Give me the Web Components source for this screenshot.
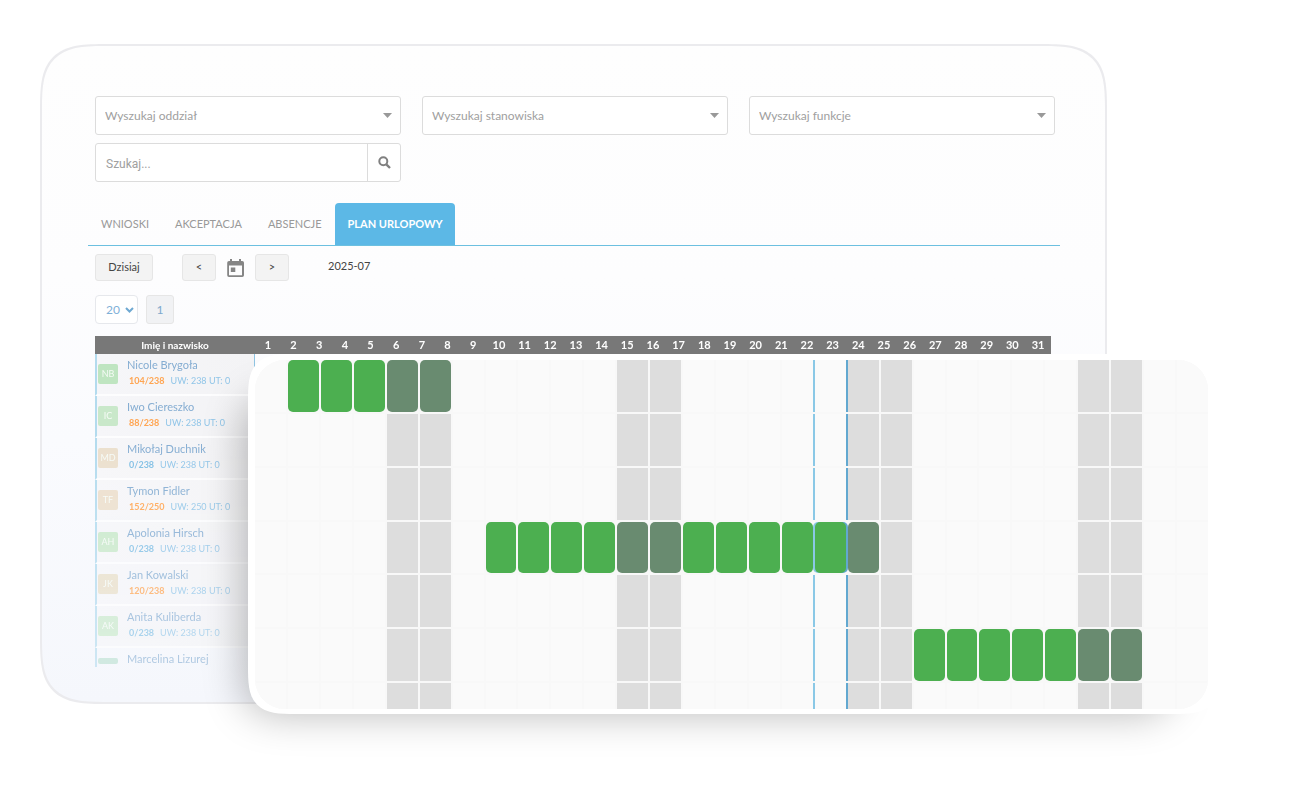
<!DOCTYPE html>
<html lang="pl">
<head>
<meta charset="utf-8">
<title>Plan urlopowy</title>
<style>
  body {
    margin: 0;
    background: #fff;
    font-family: Lato, "Liberation Sans", sans-serif;
  }
</style>
</head>
<body>
<leave-stage>
  <app-panel>
    <search-filters></search-filters>
    <nav-tabs></nav-tabs>
    <date-toolbar></date-toolbar>
    <people-table></people-table>
  </app-panel>
  <leave-calendar slot="overlay"></leave-calendar>
</leave-stage>

<script>
// page frame: the panel, with the calendar card lying over its corner
class LeaveStage extends HTMLElement {
  constructor() {
    super();
    this.attachShadow({ mode: 'open' });
    this.shadowRoot.innerHTML = `
      <style>
        :host { display: block; padding: 44px 205px 87px 40px; }
        .stage { position: relative; }
        .overlay { position: absolute; left: 208px; right: -113px; top: 310px; bottom: -10px; }
        ::slotted([slot="overlay"]) { height: 100%; }
      </style>
      <div class="stage">
        <slot></slot>
        <div class="overlay"><slot name="overlay"></slot></div>
      </div>`;
  }
}

class AppPanel extends HTMLElement {
  constructor() {
    super();
    this.attachShadow({ mode: 'open' });
    this.shadowRoot.innerHTML = `
      <style>
        :host {
          display: block;
          padding: 50px 50px 35px 53px;
          border: 2px solid #ebebee;
          border-radius: 48px;
          background: linear-gradient(#fefefe, #fdfdfe 35%, #fafbfe 60%, #f5f7fc);
        }
        @supports (corner-shape: squircle) {
          :host { border-radius: 68px; corner-shape: superellipse(1.7); }
        }
      </style>
      <slot></slot>`;
  }
}

class SearchFilters extends HTMLElement {
  constructor() {
    super();
    this.attachShadow({ mode: 'open' });
    const names = ['Wyszukaj oddział', 'Wyszukaj stanowiska', 'Wyszukaj funkcje'];
    this.shadowRoot.innerHTML = `
      <style>
        :host {
          display: grid;
          grid-template-columns: repeat(3, 1fr);
          gap: 8px 21px;
        }
        .select, .search {
          box-sizing: border-box;
          height: 39px;
          border: 1px solid #dcdcdc;
          border-radius: 3px;
          background: #fff;
        }
        .select { display: grid; align-items: center; }
        select, .select svg { grid-area: 1 / 1; }
        select {
          appearance: none;
          height: 100%;
          width: 100%;
          padding: 0 9px;
          border: 0;
          background: none;
          color: #a0a0a0;
          font: 12px Lato, sans-serif;
        }
        .select svg { justify-self: end; margin-right: 8px; pointer-events: none; }
        .search { display: flex; }
        input {
          flex: 1;
          min-width: 0;
          padding: 2px 10px 0;
          border: 0;
          background: none;
          font: 12px Roboto, sans-serif;
        }
        input::placeholder { color: #a0a0a0; opacity: 1; }
        button {
          display: grid;
          place-items: center;
          width: 33px;
          padding: 0;
          border: 0;
          border-left: 1px solid #dcdcdc;
          background: none;
        }
      </style>
      ${names.map(n => `
        <div class="select">
          <select aria-label="${n}"><option>${n}</option></select>
          <svg width="9" height="5" viewBox="0 0 9 5"><path d="M0 0h9L4.5 5z" fill="#999"/></svg>
        </div>`).join('')}
      <div class="search">
        <input type="text" placeholder="Szukaj..." aria-label="Szukaj">
        <button type="button" aria-label="Szukaj">
          <svg width="13" height="13" viewBox="0 0 13 13" fill="none" stroke="#808080" stroke-width="2">
            <circle cx="5.3" cy="5.3" r="4"/><path d="M8.3 8.3l3.7 3.7" stroke-width="2.4"/>
          </svg>
        </button>
      </div>`;
  }
}

class NavTabs extends HTMLElement {
  constructor() {
    super();
    this.attachShadow({ mode: 'open' });
    this.shadowRoot.innerHTML = `
      <style>
        :host { display: block; margin: 21px -5px 0 -7px; }
        nav { display: flex; border-bottom: 1px solid #6cc0e0; }
        a {
          padding: 0 13px;
          color: #999;
          font-size: 11px;
          line-height: 42px;
          text-decoration: none;
        }
        a.active {
          padding: 0 12px 0 13px;
          border-radius: 4px 4px 0 0;
          background: #5cb8e6;
          color: #fff;
          font-weight: bold;
        }
      </style>
      <nav>
        <a href="#wnioski">WNIOSKI</a>
        <a href="#akceptacja">AKCEPTACJA</a>
        <a href="#absencje">ABSENCJE</a>
        <a href="#plan" class="active">PLAN URLOPOWY</a>
      </nav>`;
  }
}

class DateToolbar extends HTMLElement {
  constructor() {
    super();
    this.attachShadow({ mode: 'open' });
    this.shadowRoot.innerHTML = `
      <style>
        :host { display: block; padding: 8px 0 12px; }
        .row { display: flex; align-items: center; }
        .row + .row { gap: 8px; margin-top: 14px; }
        button {
          box-sizing: border-box;
          height: 27px;
          padding: 0 0 2px;
          border: 1px solid #e6e6e6;
          border-radius: 3px;
          background: #f3f3f3;
          color: #444;
          font: 11px Lato, sans-serif;
        }
        .today { width: 58px; margin-right: 29px; }
        .step { width: 34px; }
        svg { display: block; }
        .calendar { margin: 0 11px; }
        .month { align-self: flex-start; margin-left: 39px; font-size: 11px; line-height: 24px; color: #444; }
        .size {
          display: grid;
          align-items: center;
          box-sizing: border-box;
          width: 43px;
          height: 29px;
          border: 1px solid #e6e8ec;
          border-radius: 4px;
          background: #fff;
        }
        .size > * { grid-area: 1 / 1; }
        .size svg { justify-self: end; margin-right: 3px; pointer-events: none; }
        select {
          appearance: none;
          width: 100%;
          height: 100%;
          padding: 0 10px;
          border: 0;
          background: none;
          color: #7fb0d8;
          font: 12px Lato, sans-serif;
        }
        .page { width: 28px; height: 29px; padding: 0; color: #7fa8cc; font-size: 12px; background: #f1f2f4; }
      </style>
      <div class="row">
        <button type="button" class="today">Dzisiaj</button>
        <button type="button" class="step">&lt;</button>
        <svg class="calendar" width="17" height="18" viewBox="0 0 17 18" fill="#858585">
          <path fill-rule="evenodd" d="M3 0h2v2h7V0h2v2h1.200q1.800 0 1.800 1.800v12.400q0 1.800-1.800 1.800H2q-1.800 0-1.800-1.800V3.800Q.200 2 2 2h1zM2 6.500v9.700h13V6.500zM3.800 8.500h4.500V13H3.800z"/>
        </svg>
        <button type="button" class="step">&gt;</button>
        <span class="month">2025-07</span>
      </div>
      <div class="row">
        <div class="size">
          <select aria-label="Liczba wierszy"><option>20</option></select>
          <svg width="9" height="6" viewBox="0 0 9 6" fill="none" stroke="#6fa9d2" stroke-width="2"><path d="M1 1l3.500 3.500L8 1"/></svg>
        </div>
        <button type="button" class="page">1</button>
      </div>`;
  }
}

const PEOPLE = [
  { name: 'Nicole Brygoła', initials: 'NB', used: 104, total: 238, color: '#bfe5c1' },
  { name: 'Iwo Ciereszko', initials: 'IC', used: 88, total: 238, color: '#c9e8ca' },
  { name: 'Mikołaj Duchnik', initials: 'MD', used: 0, total: 238, color: '#ebdfcd' },
  { name: 'Tymon Fidler', initials: 'TF', used: 152, total: 250, color: '#ecdfcd' },
  { name: 'Apolonia Hirsch', initials: 'AH', used: 0, total: 238, color: '#c9e9ca' },
  { name: 'Jan Kowalski', initials: 'JK', used: 120, total: 238, color: '#e9dfc9' },
  { name: 'Anita Kuliberda', initials: 'AK', used: 0, total: 238, color: '#c9e9ca' },
  // partial row, only its top part is shown
  { name: 'Marcelina Lizurej', color: '#b9e0d0', partial: true }
];

class PeopleTable extends HTMLElement {
  constructor() {
    super();
    this.attachShadow({ mode: 'open' });
  }

  connectedCallback() {
    this.render();
  }

  renderRow(p) {
    const stats = p.partial ? '' : `
              <div class="stats"><b class="${p.used ? 'used' : ''}">${p.used}/${p.total}</b><span>UW: ${p.total} UT: 0</span></div>`;
    return `
      <tr class="${p.partial ? 'partial' : ''}">
        <td>
          <div class="person">
            <span class="avatar" style="background:${p.color}">${p.initials || ''}</span>
            <div>
              <div class="name">${p.name}</div>${stats}
            </div>
          </div>
        </td>
        <td colspan="31"></td>
      </tr>`;
  }

  render() {
    const days = Array.from({ length: 31 }, (_, i) => `<th scope="col">${i + 1}</th>`).join('');
    this.shadowRoot.innerHTML = `
      <style>
        /* the list fades out downwards */
        :host {
          display: block;
          margin-right: 4px;
          -webkit-mask-image: linear-gradient(#000 30%, rgba(0, 0, 0, .6));
          mask-image: linear-gradient(#000 30%, rgba(0, 0, 0, .6));
        }
        table { width: 100%; table-layout: fixed; border-collapse: separate; border-spacing: 0; }
        th { height: 18px; padding: 0; background: #787878; color: #fff; font-size: 11px; line-height: 18px; }
        th:first-child { width: 160px; font-size: 10px; }
        td { height: 42px; padding: 0; vertical-align: top; }
        td:first-child {
          box-sizing: border-box;
          border-left: 2px solid #b3dbee;
          border-right: 1px solid #8fc4e2;
          border-bottom: 2px solid #fdfdfe;
          background: linear-gradient(90deg, #f6f6f9, #f3f3f5);
        }
        .person { display: flex; gap: 9px; height: 40px; }
        .avatar {
          width: 20px;
          height: 20px;
          margin: 10px 0 0 1px;
          border-radius: 2px;
          color: #f6fbf6;
          font-size: 9px;
          line-height: 20px;
          text-align: center;
        }
        .name { margin-top: 2px; color: #85add2; font-size: 11px; line-height: 17px; }
        .stats { padding-left: 2px; color: #90c5e8; font-size: 9px; line-height: 16px; }
        .stats b { margin-right: 6px; color: #80bfe4; }
        .stats .used { color: #ffa552; }
        .partial td { height: 19px; }
        .partial td:first-child { border-bottom: 0; background: none; }
        .partial .person { height: 19px; }
        .partial .avatar { height: 6px; }
      </style>
      <table>
        <thead><tr><th scope="col">Imię i nazwisko</th>${days}</tr></thead>
        <tbody>${PEOPLE.map(p => this.renderRow(p)).join('')}</tbody>
      </table>`;
  }
}

// enlarged part of the month: columns are days, rows are people
class LeaveCalendar extends HTMLElement {
  constructor() {
    super();
    this.attachShadow({ mode: 'open' });
  }

  connectedCallback() {
    const columns = 29;
    const weekend = [4, 5, 11, 12, 18, 19, 25, 26];
    const today = 17;
    // row -> [first, last] day of the leave
    const leaves = { 0: [1, 5], 3: [7, 18], 5: [20, 26] };

    let cells = '';
    for (let row = 0; row < 7; row++) {
      for (let col = 0; col < columns; col++) {
        const cls = [];
        if (weekend.includes(col)) cls.push('weekend');
        if (col === today) cls.push('today');
        if (leaves[row] && col >= leaves[row][0] && col <= leaves[row][1]) cls.push('leave');
        cells += `<i class="${cls.join(' ')}"></i>`;
      }
    }

    this.shadowRoot.innerHTML = `
      <style>
        :host {
          display: block;
          box-sizing: border-box;
          padding: 6px 12px 5px 7px;
          border-radius: 36px;
          background: #fff;
          box-shadow: -26px 22px 40px -22px rgba(0, 0, 0, .28);
        }
        @supports (corner-shape: squircle) {
          :host { border-radius: 48px; corner-shape: superellipse(1.7); }
        }
        .grid {
          display: grid;
          grid-template-columns: repeat(${columns}, 1fr);
          grid-template-rows: repeat(6, 2fr) 1fr;
          gap: 2px;
          height: 100%;
          border-radius: 30px;
          overflow: hidden;
          background: #f8f8f8;
        }
        i { background: #fafafa; }
        .weekend { background: #ddd; }
        .today { box-shadow: -2px 0 #8ac8e6, 2px 0 #62a8d0; }
        .leave { border-radius: 5px; background: #4caf50; }
        .leave.weekend { background: #698b70; }
      </style>
      <div class="grid">${cells}</div>`;
  }
}

customElements.define('leave-stage', LeaveStage);
customElements.define('app-panel', AppPanel);
customElements.define('search-filters', SearchFilters);
customElements.define('nav-tabs', NavTabs);
customElements.define('date-toolbar', DateToolbar);
customElements.define('people-table', PeopleTable);
customElements.define('leave-calendar', LeaveCalendar);
</script>
</body>
</html>
